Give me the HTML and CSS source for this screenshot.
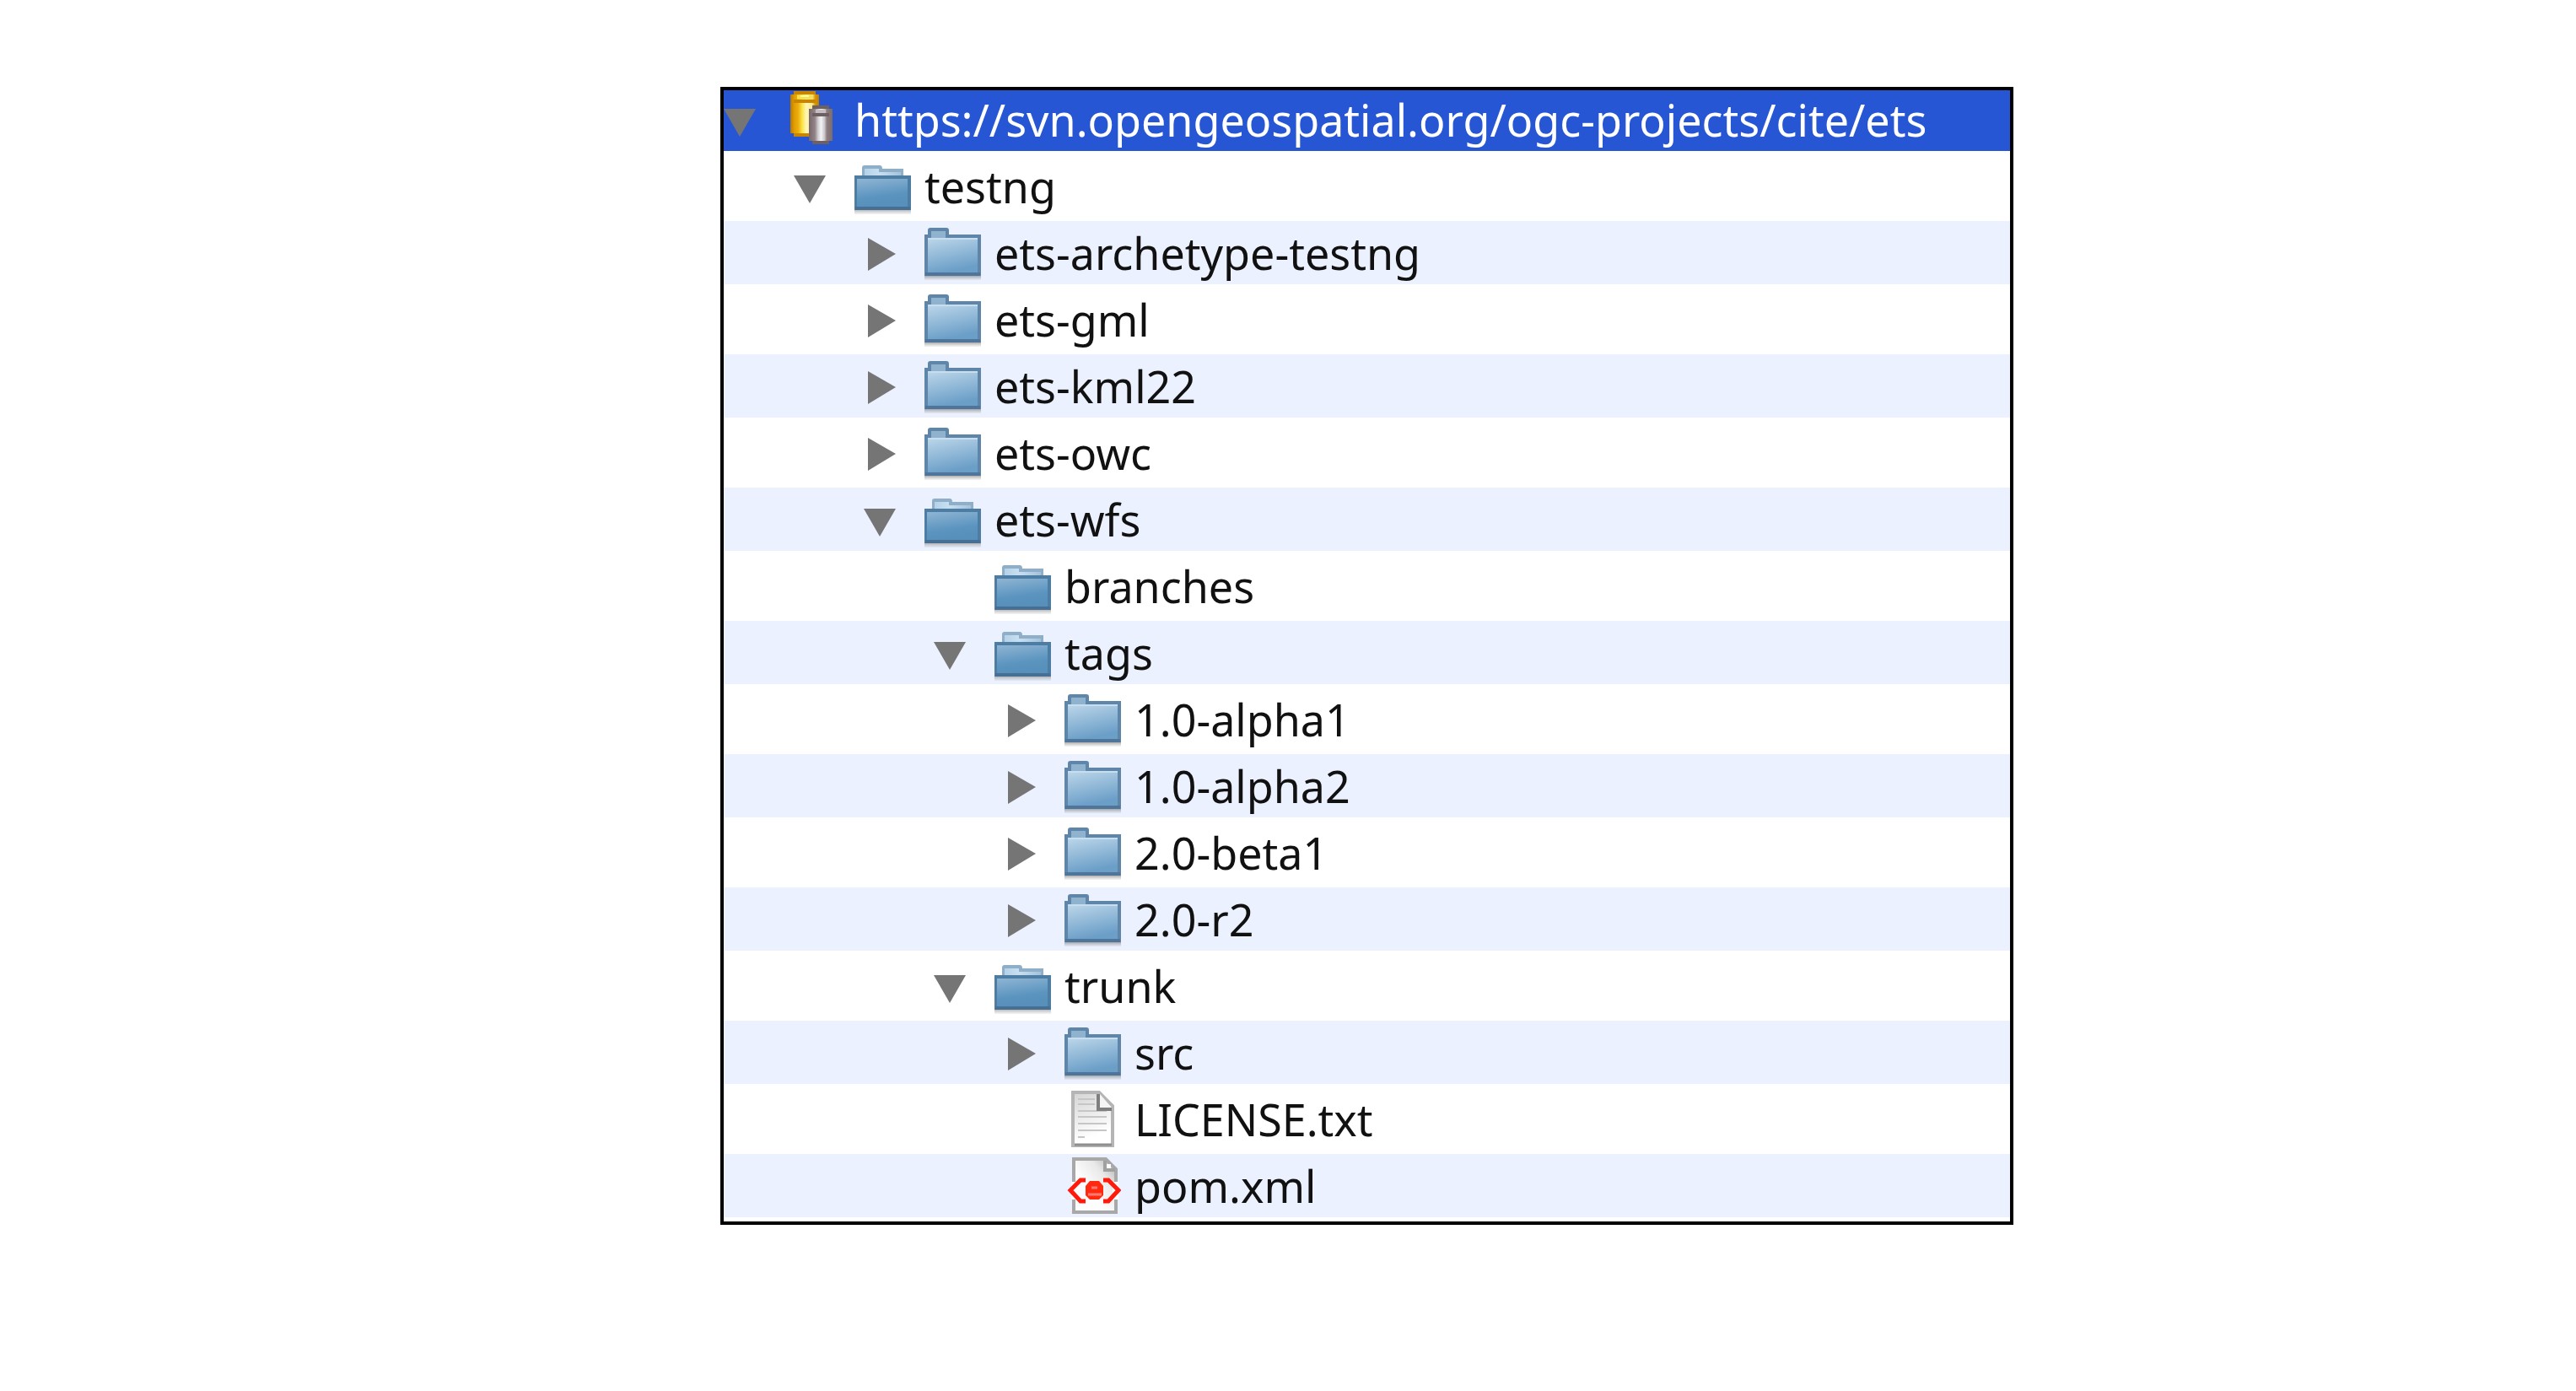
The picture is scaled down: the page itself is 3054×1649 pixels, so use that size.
FILE: index.html
```html
<!DOCTYPE html>
<html lang="en">
<head>
<meta charset="utf-8">
<meta name="viewport" content="width=device-width, initial-scale=1">
<title>Repository browser</title>
<link rel="stylesheet" href="styles.css">
</head>
<body>
<svg class="defs" aria-hidden="true">
  <defs>
    <linearGradient id="closed-fill" x1="0" y1="0" x2="0.3" y2="1">
      <stop offset="0" stop-color="#bdd7ea"/><stop offset="1" stop-color="#6c9fc8"/>
    </linearGradient>
    <linearGradient id="open-fill" x1="0" y1="0" x2="0.25" y2="1">
      <stop offset="0" stop-color="#8fb4d3"/><stop offset="0.7" stop-color="#5a94bf"/><stop offset="1" stop-color="#5790ba"/>
    </linearGradient>
    <linearGradient id="tab-fill" x1="0" y1="0" x2="1" y2="0">
      <stop offset="0" stop-color="#b4d2e8"/><stop offset="0.4" stop-color="#c8dff2"/><stop offset="1" stop-color="#a3c3dc"/>
    </linearGradient>
    <linearGradient id="shadow" x1="0" y1="0" x2="0" y2="1">
      <stop offset="0" stop-color="#777" stop-opacity="0.6"/><stop offset="1" stop-color="#999" stop-opacity="0.1"/>
    </linearGradient>
    <linearGradient id="paper" x1="0" y1="0" x2="0.3" y2="1">
      <stop offset="0" stop-color="#d4d4d4"/><stop offset="0.9" stop-color="#fff"/>
    </linearGradient>
    <linearGradient id="paper-xml" x1="1" y1="0" x2="0.4" y2="0.6">
      <stop offset="0" stop-color="#a9a9a9"/><stop offset="0.5" stop-color="#e9e9e9"/><stop offset="1" stop-color="#fdfdfd"/>
    </linearGradient>
    <linearGradient id="gold">
      <stop offset="0" stop-color="#b87800"/><stop offset="0.13" stop-color="#e09c00"/><stop offset="0.28" stop-color="#eeb010"/><stop offset="0.42" stop-color="#fbe54a"/><stop offset="0.56" stop-color="#fff7b8"/><stop offset="0.76" stop-color="#fbe98a"/><stop offset="0.86" stop-color="#dc9a04"/><stop offset="1" stop-color="#bd7c00"/>
    </linearGradient>
    <linearGradient id="silver">
      <stop offset="0" stop-color="#75676a"/><stop offset="0.25" stop-color="#908286"/><stop offset="0.4" stop-color="#d5d2d6"/><stop offset="0.52" stop-color="#f3f2f5"/><stop offset="0.66" stop-color="#cbc6ca"/><stop offset="0.76" stop-color="#8c7e80"/><stop offset="1" stop-color="#7a6a6c"/>
    </linearGradient>
    <symbol id="down" viewBox="0 0 38 67"><path d="M0 21H38L19 54Z" fill="#757575"/></symbol>
    <symbol id="right" viewBox="0 0 38 67"><path d="M5 16V55L38 35Z" fill="#757575"/></symbol>
    <symbol id="closed" viewBox="0 0 67 67">
      <rect x="0" y="61" width="67" height="5" fill="url(#shadow)"/>
      <path d="M4 14V7Q4 4 7 4H26Q29 4 29 7V12H67V61H0V12H4Z" fill="#5f86a8"/>
      <path d="M8 16V8H25V16Z" fill="#8fb3cf"/>
      <rect x="4" y="16" width="59" height="41" fill="url(#closed-fill)"/>
      <path d="M4 17H63" stroke="#c7ddf0" stroke-width="2"/>
      <rect x="1" y="57" width="65" height="4" fill="#4f769a"/>
    </symbol>
    <symbol id="open" viewBox="0 0 67 67">
      <rect x="0" y="61" width="67" height="6" fill="url(#shadow)"/>
      <path d="M9 22V12Q9 9 12 9H30Q33 9 33 13H58V22Z" fill="#8eafc7"/>
      <path d="M12 22V13H29V17H55V22Z" fill="url(#tab-fill)"/>
      <path d="M0 21H67V62H0Z" fill="#4d7da3"/>
      <rect x="3" y="25" width="60" height="33" fill="url(#open-fill)"/>
      <rect x="1" y="58" width="65" height="4" fill="#466f93"/>
    </symbol>
    <symbol id="text" viewBox="0 0 67 67">
      <path d="M10 2H41L57 18V65H10Z" fill="url(#paper)" stroke="#b5b5b5" stroke-width="4"/>
      <path d="M16 10H36M16 16H36M16 24H50M16 31H50M16 39H50M16 47H50M16 55H24" stroke="#c6c6c6" stroke-width="2"/>
      <path d="M42 4V20H56Z" fill="#f5f5f5"/>
      <path d="M40 4V22H56" fill="none" stroke="#7f7f7f" stroke-width="4"/>
      <path d="M12 64H56" stroke="#8f8f8f" stroke-width="3"/>
    </symbol>
    <symbol id="xml" viewBox="0 0 67 67">
      <path d="M11 2H49L61 14V65H11Z" fill="url(#paper-xml)" stroke="#a8a8a8" stroke-width="4"/>
      <path d="M8 29H15V50H8ZM57 29H64V50H57Z" fill="#fff"/>
      <path d="M48 4V15H60" fill="none" stroke="#a0a0a0" stroke-width="4"/>
      <rect x="50" y="8" width="5" height="5" fill="#fff"/>
      <path d="M25 27H19L7 39L19 52H25M46 27H52L64 39L52 52H46" fill="none" stroke="#ff1a0c" stroke-width="5"/>
      <path d="M30 28H41L46 34V45L41 50H30L25 45V34Z" fill="#ff2a10"/>
      <path d="M28 44H44M32 36H39" stroke="#ff7a70" stroke-width="3"/>
      <path d="M32 48H39" stroke="#ff2a10" stroke-width="4"/>
    </symbol>
    <symbol id="repo" viewBox="0 0 67 67">
      <path d="M11 0H37V4H41V50H37V54H11V50H7V4H11Z" fill="url(#gold)"/>
      <path d="M11 2H37M11 12H37M11 52H37" stroke="#c88600" stroke-width="4"/>
      <path d="M15 7H33" stroke="#f7e04a" stroke-width="5"/>
      <path d="M19 6H29" stroke="#fff9a0" stroke-width="2"/>
      <path d="M33 17H53V21H57V59H53V63H33V59H29V21H33Z" fill="url(#silver)"/>
      <path d="M33 19H53M33 28H53M33 61H53" stroke="#6d5f62" stroke-width="4"/>
      <path d="M37 24H49" stroke="#c4bec2" stroke-width="4"/>
    </symbol>
  </defs>
</svg>
<main class="page">
  <ul class="tree" role="tree" aria-label="Repository">
    <li class="row level-0 selected" role="treeitem" aria-level="1" aria-expanded="true" aria-selected="true"><button class="toggle" aria-label="Collapse"><svg><use href="#down"/></svg></button><svg class="icon"><use href="#repo"/></svg><span class="name">https://svn.opengeospatial.org/ogc-projects/cite/ets</span></li>
    <li class="row level-1" role="treeitem" aria-level="2" aria-expanded="true"><button class="toggle" aria-label="Collapse"><svg><use href="#down"/></svg></button><svg class="icon"><use href="#open"/></svg><span class="name">testng</span></li>
    <li class="row level-2" role="treeitem" aria-level="3" aria-expanded="false"><button class="toggle" aria-label="Expand"><svg><use href="#right"/></svg></button><svg class="icon"><use href="#closed"/></svg><span class="name">ets-archetype-testng</span></li>
    <li class="row level-2" role="treeitem" aria-level="3" aria-expanded="false"><button class="toggle" aria-label="Expand"><svg><use href="#right"/></svg></button><svg class="icon"><use href="#closed"/></svg><span class="name">ets-gml</span></li>
    <li class="row level-2" role="treeitem" aria-level="3" aria-expanded="false"><button class="toggle" aria-label="Expand"><svg><use href="#right"/></svg></button><svg class="icon"><use href="#closed"/></svg><span class="name">ets-kml22</span></li>
    <li class="row level-2" role="treeitem" aria-level="3" aria-expanded="false"><button class="toggle" aria-label="Expand"><svg><use href="#right"/></svg></button><svg class="icon"><use href="#closed"/></svg><span class="name">ets-owc</span></li>
    <li class="row level-2" role="treeitem" aria-level="3" aria-expanded="true"><button class="toggle" aria-label="Collapse"><svg><use href="#down"/></svg></button><svg class="icon"><use href="#open"/></svg><span class="name">ets-wfs</span></li>
    <li class="row level-3" role="treeitem" aria-level="4"><span class="toggle"></span><svg class="icon"><use href="#open"/></svg><span class="name">branches</span></li>
    <li class="row level-3" role="treeitem" aria-level="4" aria-expanded="true"><button class="toggle" aria-label="Collapse"><svg><use href="#down"/></svg></button><svg class="icon"><use href="#open"/></svg><span class="name">tags</span></li>
    <li class="row level-4" role="treeitem" aria-level="5" aria-expanded="false"><button class="toggle" aria-label="Expand"><svg><use href="#right"/></svg></button><svg class="icon"><use href="#closed"/></svg><span class="name">1.0-alpha1</span></li>
    <li class="row level-4" role="treeitem" aria-level="5" aria-expanded="false"><button class="toggle" aria-label="Expand"><svg><use href="#right"/></svg></button><svg class="icon"><use href="#closed"/></svg><span class="name">1.0-alpha2</span></li>
    <li class="row level-4" role="treeitem" aria-level="5" aria-expanded="false"><button class="toggle" aria-label="Expand"><svg><use href="#right"/></svg></button><svg class="icon"><use href="#closed"/></svg><span class="name">2.0-beta1</span></li>
    <li class="row level-4" role="treeitem" aria-level="5" aria-expanded="false"><button class="toggle" aria-label="Expand"><svg><use href="#right"/></svg></button><svg class="icon"><use href="#closed"/></svg><span class="name">2.0-r2</span></li>
    <li class="row level-3" role="treeitem" aria-level="4" aria-expanded="true"><button class="toggle" aria-label="Collapse"><svg><use href="#down"/></svg></button><svg class="icon"><use href="#open"/></svg><span class="name">trunk</span></li>
    <li class="row level-4" role="treeitem" aria-level="5" aria-expanded="false"><button class="toggle" aria-label="Expand"><svg><use href="#right"/></svg></button><svg class="icon"><use href="#closed"/></svg><span class="name">src</span></li>
    <li class="row level-4" role="treeitem" aria-level="5"><span class="toggle"></span><svg class="icon"><use href="#text"/></svg><span class="name">LICENSE.txt</span></li>
    <li class="row level-4" role="treeitem" aria-level="5"><span class="toggle"></span><svg class="icon"><use href="#xml"/></svg><span class="name">pom.xml</span></li>
  </ul>
</main>
</body>
</html>
```
FILE: styles.css
```css
* {
  box-sizing: border-box;
}

body {
  margin: 0;
  background: #fff;
  color: #111;
  font-family: "Noto Sans", "Open Sans", sans-serif;
  font-size: 52px;
  line-height: 67px;
}

.defs {
  position: absolute;
  width: 0;
  height: 0;
}

.page {
  display: grid;
  grid-template-columns: 854fr 1533fr 667fr;
  padding: 103px 0;
}

.tree {
  grid-column: 2;
  margin: 0;
  padding: 0 0 5px;
  list-style: none;
  border: 4px solid #000;
}

.row {
  display: flex;
  align-items: center;
  height: 75px;
  background: #ebf1fe;
}

.row:nth-child(even) {
  height: 83px;
  background: #fff;
}

.row.selected {
  height: 72px;
  padding-bottom: 4px;
  background: #2656d3;
  color: #fff;
}

.level-1 { padding-left: 83px; }
.level-2 { padding-left: 166px; }
.level-3 { padding-left: 249px; }
.level-4 { padding-left: 332px; }

.toggle {
  flex: none;
  width: 38px;
  height: 67px;
  margin-right: 34px;
  padding: 0;
  border: 0;
  background: none;
}

.toggle svg {
  display: block;
  width: 38px;
  height: 67px;
}

.icon {
  flex: none;
  width: 67px;
  height: 67px;
  margin-right: 16px;
}

.name {
  white-space: nowrap;
}
```
